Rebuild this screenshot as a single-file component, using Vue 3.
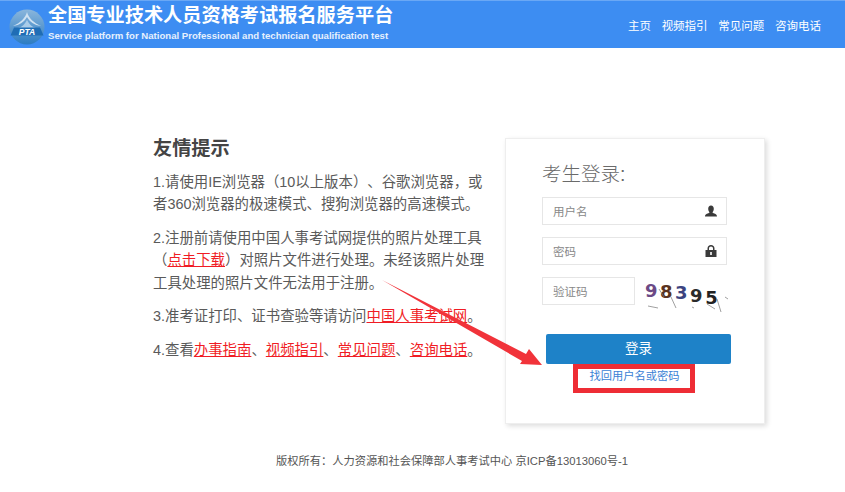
<template>
  <div class="page">
    <header class="top-bar">
      <div class="brand">
        <svg class="logo" width="36" height="36" viewBox="0 0 36 36">
          <defs>
            <linearGradient id="logoFill" x1="0" y1="0" x2="0" y2="1">
              <stop offset="0" stop-color="#8ab6dc" />
              <stop offset="1" stop-color="#2c7cc2" />
            </linearGradient>
          </defs>
          <circle cx="18" cy="18" r="17.5" fill="url(#logoFill)" />
          <path d="M18 3 C16.5 9 11 14 4 17 C11 16 15 13 18 8 C21 13 25 16 32 17 C25 14 19.5 9 18 3 Z" fill="#cfe2f2" />
          <path d="M18 11 C16 15 13 18 9 19 L27 19 C23 18 20 15 18 11 Z" fill="#a9cce9" />
          <path d="M5 18.5 H31 L34.5 26.5 H1.5 Z" fill="#1f6db5" />
          <text x="18" y="25.5" text-anchor="middle" class="logo-text">PTA</text>
        </svg>
        <div class="brand-text">
          <div class="brand-title">全国专业技术人员资格考试报名服务平台</div>
          <div class="brand-sub">Service platform for National Professional and technician qualification test</div>
        </div>
      </div>
      <nav class="top-nav">
        <a v-for="item in navItems" :key="item">{{ item }}</a>
      </nav>
    </header>

    <main class="content">
      <section class="tips">
        <h2>友情提示</h2>
        <p>1.请使用IE浏览器（10以上版本）、谷歌浏览器，或者360浏览器的极速模式、搜狗浏览器的高速模式。</p>
        <p>2.注册前请使用中国人事考试网提供的照片处理工具（<a>点击下载</a>）对照片文件进行处理。未经该照片处理工具处理的照片文件无法用于注册。</p>
        <p>3.准考证打印、证书查验等请访问<a>中国人事考试网</a>。</p>
        <p>4.查看<a>办事指南</a>、<a>视频指引</a>、<a>常见问题</a>、<a>咨询电话</a>。</p>
      </section>

      <section class="login-card">
        <h3>考生登录:</h3>
        <div class="field">
          <span>用户名</span>
          <svg width="14" height="14" viewBox="0 0 14 14">
            <path d="M7 1.5 C8.8 1.5 9.8 3 9.8 4.8 C9.8 6.6 9 7.6 8.4 8.6 C9.5 9.6 13 9.8 13 12.5 H1 C1 9.8 4.5 9.6 5.6 8.6 C5 7.6 4.2 6.6 4.2 4.8 C4.2 3 5.2 1.5 7 1.5 Z" fill="#3a3a3a" />
          </svg>
        </div>
        <div class="field">
          <span>密码</span>
          <svg width="14" height="14" viewBox="0 0 14 14">
            <path d="M1.5 6 H3.5 V4.5 C3.5 2.3 5 1 7 1 C9 1 10.5 2.3 10.5 4.5 V6 H12.5 V13 H1.5 Z M5 6 H9 V4.5 C9 3.2 8.2 2.4 7 2.4 C5.8 2.4 5 3.2 5 4.5 Z" fill="#3a3a3a" fill-rule="evenodd" />
            <rect x="6.2" y="8" width="1.6" height="3" fill="#fff" />
          </svg>
        </div>
        <div class="captcha-row">
          <div class="field short"><span>验证码</span></div>
          <div class="captcha">
            <span
              v-for="d in captchaDigits"
              :key="d.id"
              :style="{ color: d.color, transform: `translateY(${d.y}px)` }"
            >{{ d.n }}</span>
            <svg class="noise" width="88" height="40" viewBox="0 0 88 40">
              <path d="M3 29 L13 31 M14 12 L19 20 M26 20 L31 31 M47 30 L49 31 M62 27 L70 32 M72 22 L76 35 M80 20 L83 22" stroke="#777" stroke-width="0.7" fill="none" />
            </svg>
          </div>
        </div>
        <button class="login-btn">登录</button>
        <a class="forgot">找回用户名或密码</a>
      </section>
    </main>

    <footer class="copyright">版权所有：人力资源和社会保障部人事考试中心 京ICP备13013060号-1</footer>

    <!-- red annotation drawn over the page -->
    <svg class="arrow" width="845" height="492" viewBox="0 0 845 492">
      <polygon points="382,280 526,354 529,349 542,365 520,364 522,361" fill="#f1333a" />
    </svg>
    <div class="red-box"></div>
  </div>
</template>

<script setup>
const navItems = ['主页', '视频指引', '常见问题', '咨询电话']

const captchaDigits = [
  { id: 1, n: '9', color: '#6b4a86', y: 1 },
  { id: 2, n: '8', color: '#5a3320', y: 2 },
  { id: 3, n: '3', color: '#3c4480', y: 3 },
  { id: 4, n: '9', color: '#2b2b2b', y: 6 },
  { id: 5, n: '5', color: '#222', y: 8 },
]
</script>

<style>
html,
body {
  margin: 0;
  background: #fff;
}
</style>

<style scoped>
.page {
  position: relative;
  width: 845px;
  height: 492px;
  overflow: hidden;
  font-family: "Liberation Sans", "Noto Sans CJK SC", sans-serif;
  text-spacing-trim: space-all;
  color: #5a5a5a;
}

.top-bar {
  display: flex;
  justify-content: space-between;
  align-items: center;
  height: 48px;
  padding: 0 24px 0 9px;
  box-sizing: border-box;
  background: #3d8df2;
  border-top: 1px solid #6aa8f5;
  color: #fff;
}

.brand {
  display: flex;
  align-items: center;
  gap: 3px;
}

.logo {
  margin-top: 4px;
}

.logo-text {
  font-size: 8.5px;
  font-weight: 700;
  font-style: italic;
  fill: #fff;
}

.brand-text {
  margin-top: -4px;
}

.brand-title {
  font-size: 19.2px;
  font-weight: 700;
  line-height: 26px;
}

.brand-sub {
  font-size: 9.6px;
  font-weight: 700;
  line-height: 14px;
  color: #e6f0fd;
}

.top-nav {
  display: flex;
  gap: 10.7px;
  font-size: 11.5px;
  margin-top: 1px;
}

.content {
  display: flex;
  align-items: flex-start;
  height: 375px;
  padding: 90px 0 0 153px;
  box-sizing: border-box;
}

.tips {
  width: 335px;
  margin-right: 17px;
  font-size: 14.4px;
  line-height: 22.4px;
}

.tips h2 {
  margin: 0 0 12px;
  padding-top: 1px;
  font-size: 19.2px;
  font-weight: 700;
  line-height: 20px;
  color: #444;
}

.tips p {
  margin: 0 0 11px;
}

.tips p:last-child {
  margin-top: 12px;
}

.tips a {
  color: #f01c24;
  text-decoration: underline;
}

.login-card {
  width: 260px;
  height: 286px;
  padding: 23px 36px 0;
  box-sizing: border-box;
  background: #fff;
  border: 1px solid #eee;
  box-shadow: 2px 2px 5px rgba(0, 0, 0, 0.14);
}

.login-card h3 {
  margin: 0 0 11px;
  font-size: 19.5px;
  font-weight: 300;
  line-height: 24px;
  color: #6a6a6a;
}

.field {
  display: flex;
  justify-content: space-between;
  align-items: center;
  height: 28px;
  width: 185px;
  margin-bottom: 12px;
  padding: 0 8px 0 10px;
  box-sizing: border-box;
  border: 1px solid #e6e6e6;
  font-size: 11.5px;
  color: #888;
}

.field.short {
  width: 93px;
  margin-bottom: 0;
}

.captcha-row {
  display: flex;
  gap: 10px;
}

.captcha {
  position: relative;
  display: flex;
  width: 82px;
  height: 30px;
  font-family: "DejaVu Sans", sans-serif;
  font-size: 18px;
  font-weight: 700;
  line-height: 26px;
  letter-spacing: 2.5px;
}

.captcha span {
  display: block;
}

.noise {
  position: absolute;
  left: 0;
  top: 0;
}

.login-btn {
  display: block;
  width: 185px;
  height: 30px;
  margin: 27px 0 0 4px;
  padding: 0 0 4px;
  border: none;
  border-radius: 2px;
  background: #1e82c8;
  color: #fff;
  font-family: inherit;
  font-size: 13.5px;
}

.forgot {
  display: block;
  width: 185px;
  margin: 4px 0 0 0;
  text-align: center;
  font-size: 11.25px;
  line-height: 16px;
  color: #3a7fd5;
}

.copyright {
  text-align: center;
  font-size: 11.25px;
  line-height: 16px;
  padding-top: 30px;
  padding-left: 59px;
  color: #555;
}

.arrow {
  position: absolute;
  left: 0;
  top: 0;
  pointer-events: none;
}

.red-box {
  position: absolute;
  left: 573px;
  top: 364px;
  width: 122px;
  height: 29px;
  box-sizing: border-box;
  border: 5px solid #ee2d35;
  pointer-events: none;
}
</style>
